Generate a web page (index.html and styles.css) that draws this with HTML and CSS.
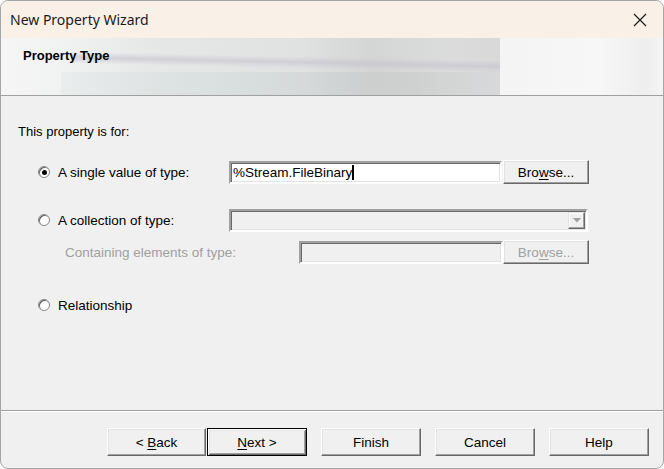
FILE: index.html
```html
<!DOCTYPE html>
<html>
<head>
<meta charset="utf-8">
<link rel="stylesheet" href="styles.css">
</head>
<body>
<div class="window">
  <div class="titlebar">
    <span class="title">New Property Wizard</span>
    <svg class="close" width="14" height="14" viewBox="0 0 14 14"><path d="M1 1 L13 13 M13 1 L1 13" stroke="#1a1a1a" stroke-width="1.2" fill="none"/></svg>
  </div>
  <div class="header">
    <div class="banner">
      <div class="shape s1"></div>
      <div class="shape s2"></div>
      <div class="shape s4"></div>
    </div>
    <div class="banner-right"></div>
    <div class="header-title">Property Type</div>
  </div>
  <div class="body">
    <div class="intro">This property is for:</div>
    <div class="row r1">
      <span class="radio checked"></span>
      <span class="label">A single value of type:</span>
      <div class="textbox"><span class="value">%Stream.FileBinary</span><span class="caret"></span></div>
      <button class="btn browse">Bro<u>w</u>se...</button>
    </div>
    <div class="row r2">
      <span class="radio"></span>
      <span class="label">A collection of type:</span>
      <div class="combo disabled">
        <span class="drop"><svg width="8" height="5" viewBox="0 0 8 5"><path d="M0 0 H8 L4 4.5 Z" fill="#a0a0a0"/></svg></span>
      </div>
    </div>
    <div class="row r3">
      <span class="sublabel">Containing elements of type:</span>
      <div class="textbox disabled small"></div>
      <button class="btn browse disabled">Bro<u>w</u>se...</button>
    </div>
    <div class="row r4">
      <span class="radio"></span>
      <span class="label">Relationship</span>
    </div>
  </div>
  <div class="separator"></div>
  <div class="footer">
    <button class="btn fbtn">&lt; <u>B</u>ack</button>
    <button class="btn fbtn default"><u>N</u>ext &gt;</button>
    <button class="btn fbtn gap">Finish</button>
    <button class="btn fbtn gap">Cancel</button>
    <button class="btn fbtn gap">Help</button>
  </div>
</div>
</body>
</html>
```

FILE: styles.css
```css
html, body {
  margin: 0;
  padding: 0;
  background: #ffffff;
}
body {
  width: 664px;
  height: 469px;
  overflow: hidden;
  font-family: "Liberation Sans", Arial, sans-serif;
  font-size: 13px;
  color: #000;
}
.window {
  width: 664px;
  height: 469px;
  box-sizing: border-box;
  border: 1px solid #a6a6a6;
  border-radius: 8px;
  overflow: hidden;
  background: #f0f0f0;
  display: flex;
  flex-direction: column;
}
.titlebar {
  height: 37px;
  flex: none;
  background: #f9f1e7;
  display: flex;
  align-items: center;
  justify-content: space-between;
  padding: 0 16px 0 9px;
}
.title {
  font-family: "Noto Sans", "Open Sans", sans-serif;
  font-size: 14px;
  color: #1b1b1b;
}
.close {
  display: block;
}
.header {
  height: 57px;
  flex: none;
  position: relative;
  background: #f6f6f6;
  border-bottom: 1px solid #a0a0a0;
  display: flex;
  overflow: hidden;
}
.banner {
  width: 499px;
  height: 100%;
  position: relative;
  background:
    linear-gradient(90deg, #f6f6f6 0px, #f0f1f1 70px, #e6e8e8 150px, #e0e2e2 300px, #dcdddd 400px, #d9d9d9 499px);
  overflow: hidden;
}
.banner-right {
  flex: 1;
  background: linear-gradient(90deg, #f4f4f4, #f7f7f7 60%, #eeeeee 90%, #f5f5f5);
}
.shape {
  position: absolute;
}
.s1 {
  left: 70px; top: 18px; width: 430px; height: 12px;
  background: linear-gradient(180deg, rgba(205,205,212,0), rgba(200,198,208,0.7) 50%, rgba(220,224,224,0));
  transform: skewY(1.2deg);
}
.s2 {
  left: 60px; top: 34px; width: 440px; height: 23px;
  background: linear-gradient(90deg, rgba(228,234,233,0.6), rgba(214,220,220,0.8) 40%, rgba(205,208,208,0.8) 80%, rgba(215,216,217,0.8));
}
.s4 {
  left: 300px; top: 0; width: 140px; height: 57px;
  background: linear-gradient(90deg, rgba(200,200,200,0), rgba(195,195,195,0.35) 50%, rgba(200,200,200,0));
}
.header-title {
  position: absolute;
  left: 22px;
  top: 10px;
  font-weight: bold;
  font-size: 13px;
}
.body {
  flex: 1;
  padding: 28px 0 0 17px;
  display: flex;
  flex-direction: column;
}
.intro {
  line-height: 16px;
  height: 16px;
}
.row {
  display: flex;
  align-items: center;
}
.r1 { margin-top: 20px; height: 24px; }
.r2 { margin-top: 24px; height: 24px; }
.r3 { margin-top: 8px; height: 24px; }
.r4 { margin-top: 33px; height: 16px; }
.radio {
  width: 12px;
  height: 12px;
  box-sizing: border-box;
  margin-left: 20px;
  border-radius: 50%;
  background: #ffffff;
  border: 1px solid #8a8a8a;
  box-shadow: inset 1px 1px 0 #5f5f5f, 0 0 0 0.5px #e8e8e8;
  position: relative;
  flex: none;
}
.radio.checked::after {
  content: "";
  position: absolute;
  left: 2.5px;
  top: 2.5px;
  width: 5px;
  height: 5px;
  border-radius: 50%;
  background: #000;
}
.label {
  margin-left: 8px;
  width: 171px;
  flex: none;
  font-size: 13.5px;
}
.sublabel {
  margin-left: 47px;
  width: 234px;
  flex: none;
  color: #a0a0a0;
  font-size: 13.5px;
}
.textbox, .combo {
  box-sizing: border-box;
  height: 23px;
  border-style: solid;
  border-width: 2px;
  border-color: #a0a0a0 #ffffff #ffffff #a0a0a0;
  box-shadow: inset 1px 1px 0 #696969, inset -1px -1px 0 #e3e3e3;
  background: #ffffff;
  display: flex;
  align-items: center;
  flex: none;
}
.textbox {
  width: 273px;
  padding-left: 2px;
  font-size: 13.5px;
}
.textbox.small {
  width: 204px;
}
.textbox.disabled, .combo.disabled {
  background: #f0f0f0;
}
.combo {
  width: 359px;
  justify-content: flex-end;
  padding-right: 1px;
}
.drop {
  width: 17px;
  height: 17px;
  box-sizing: border-box;
  border-style: solid;
  border-width: 1px;
  border-color: #e3e3e3 #696969 #696969 #e3e3e3;
  box-shadow: inset -1px -1px 0 #a0a0a0, inset 1px 1px 0 #ffffff;
  display: flex;
  align-items: center;
  justify-content: center;
  background: #f0f0f0;
}
.caret {
  width: 2px;
  height: 15px;
  background: #000;
}
.btn {
  font-family: "Liberation Sans", Arial, sans-serif;
  font-size: 13.5px;
  color: #000;
  background: #f0f0f0;
  box-sizing: border-box;
  border-style: solid;
  border-width: 1px;
  border-color: #ffffff #696969 #696969 #ffffff;
  box-shadow: inset -1px -1px 0 #a0a0a0, inset 1px 1px 0 #e3e3e3;
  padding: 0;
  margin: 0;
  flex: none;
}
.browse {
  width: 86px;
  height: 24px;
  margin-left: 1px;
}
.r3 .browse {
  margin-left: 0;
}
.btn.disabled {
  color: #a0a0a0;
}
.btn u {
  text-underline-offset: 2px;
}
.separator {
  height: 1px;
  background: #a0a0a0;
  border-bottom: 1px solid #ffffff;
  flex: none;
}
.footer {
  height: 56px;
  flex: none;
  display: flex;
  padding: 16px 0 0 106px;
  box-sizing: border-box;
}
.fbtn {
  width: 99px;
  height: 28px;
}
.fbtn.default {
  margin-left: 1px;
  border: 1px solid #000;
  box-shadow: inset 1px 1px 0 #ffffff, inset -1px -1px 0 #696969, inset 2px 2px 0 #e3e3e3, inset -2px -2px 0 #a0a0a0;
  width: 100px;
}
.fbtn.gap {
  margin-left: 14px;
  width: 100px;
}
```
